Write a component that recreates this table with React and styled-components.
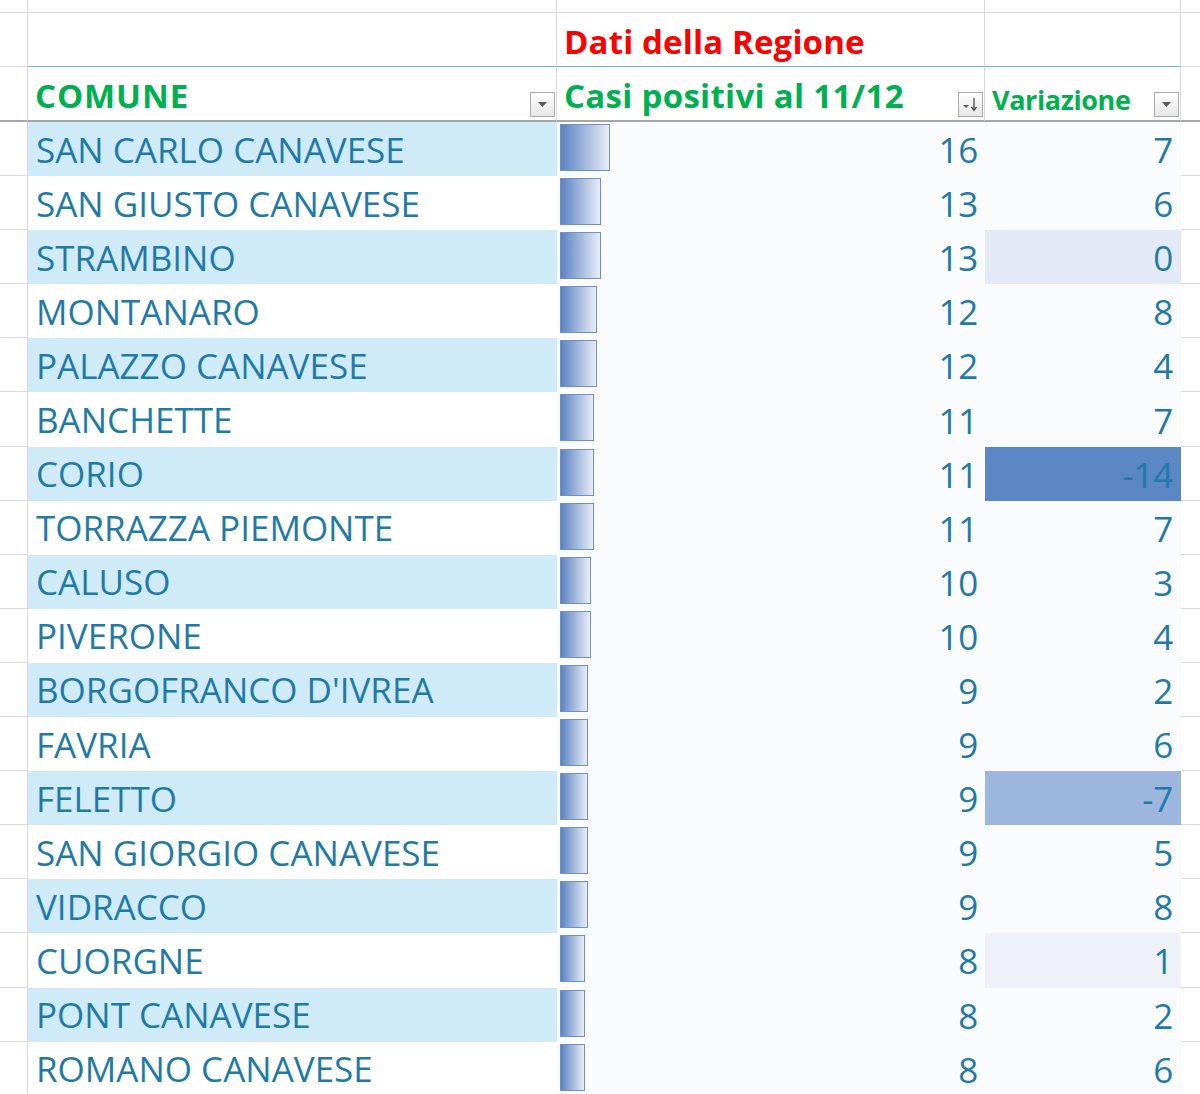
import React from 'react';
import styled, { createGlobalStyle } from 'styled-components';

const GlobalStyle = createGlobalStyle`
  html, body { margin: 0; padding: 0; background: #ffffff; }
  body { font-family: "Open Sans", "Liberation Sans", sans-serif; }
`;

const COLS = '28px 529px 428px 196px 1fr';
const GRID = '#d9d9d9';
const TEXT = '#1f7aa8';

const data = [
  ['SAN CARLO CANAVESE', 16, 7],
  ['SAN GIUSTO CANAVESE', 13, 6],
  ['STRAMBINO', 13, 0],
  ['MONTANARO', 12, 8],
  ['PALAZZO CANAVESE', 12, 4],
  ['BANCHETTE', 11, 7],
  ['CORIO', 11, -14],
  ['TORRAZZA PIEMONTE', 11, 7],
  ['CALUSO', 10, 3],
  ['PIVERONE', 10, 4],
  ["BORGOFRANCO D'IVREA", 9, 2],
  ['FAVRIA', 9, 6],
  ['FELETTO', 9, -7],
  ['SAN GIORGIO CANAVESE', 9, 5],
  ['VIDRACCO', 9, 8],
  ['CUORGNE', 8, 1],
  ['PONT CANAVESE', 8, 2],
  ['ROMANO CANAVESE', 8, 6],
];

const varFill = (v) => {
  if (v === -14) return '#5b87c5';
  if (v === -7) return '#9cb6dd';
  if (v === 0) return '#e3eaf5';
  if (v === 1) return '#eef2f8';
  return '#fafbfd';
};

const Sheet = styled.div`
  width: 1200px;
  height: 1094px;
  overflow: hidden;
  background: #ffffff;
`;

const Row = styled.div`
  display: grid;
  grid-template-columns: ${COLS};
  height: ${(p) => p.$h}px;
  box-sizing: border-box;
`;

const Stub = styled.div`
  border-right: 1px solid ${GRID};
  border-bottom: ${(p) => (p.$heavy ? '2px solid #a6a6a6' : `1px solid ${GRID}`)};
`;

const TopCell = styled.div`
  border-right: ${(p) => (p.$last ? 'none' : `1px solid ${GRID}`)};
  border-bottom: 1px solid ${GRID};
`;

const TitleCell = styled.div`
  display: flex;
  align-items: flex-end;
  padding: 0 0 2px 7px;
  border-right: ${(p) => (p.$last ? 'none' : `1px solid ${GRID}`)};
  border-bottom: 1px solid ${(p) => (p.$blue ? '#66b4da' : GRID)};
  font-size: 33px;
  font-weight: 700;
  letter-spacing: 0.15px;
  color: #ff0000;
  line-height: 44px;
  white-space: nowrap;
`;

const HeadCell = styled.div`
  display: flex;
  align-items: flex-end;
  justify-content: space-between;
  padding: 0 ${(p) => (p.$pr ? `${p.$pr}px` : '0')} 2px 7px;
  border-right: ${(p) => (p.$line ? `1px solid ${GRID}` : 'none')};
  border-bottom: 2px solid #a6a6a6;
  color: #00b050;
  font-weight: 700;
  white-space: nowrap;
`;

const HeadLabel = styled.span`
  font-size: ${(p) => p.$size || 33}px;
  letter-spacing: ${(p) => p.$ls || 0}px;
  line-height: ${(p) => p.$lh || 44}px;
`;

const FilterBtn = styled.div`
  width: 23px;
  height: 23px;
  margin-bottom: 1px;
  flex: none;
  border: 1px solid #ababab;
  background: linear-gradient(#ffffff, #e6e6e6);
  display: flex;
  align-items: center;
  justify-content: center;
`;

const NameCell = styled.div`
  display: flex;
  align-items: center;
  padding-left: 8px;
  background: ${(p) => (p.$band ? '#cfebf8' : '#ffffff')};
  color: ${TEXT};
  font-size: 35px;
  letter-spacing: 0px;
  white-space: nowrap;
  overflow: hidden;
`;

const CasesCell = styled.div`
  display: flex;
  align-items: center;
  justify-content: space-between;
  padding: 0 7px 0 3px;
  background: #fafbfd;
  color: ${TEXT};
  font-size: 35px;
  letter-spacing: -0.3px;
`;

const Bar = styled.div`
  align-self: flex-start;
  margin-top: 2px;
  height: 47px;
  box-sizing: border-box;
  border: 1px solid #6f8fc6;
  background: linear-gradient(to right, #5a83c2, #e9edf6);
`;

const VarCell = styled.div`
  display: flex;
  align-items: center;
  justify-content: flex-end;
  padding-right: 8px;
  background: ${(p) => p.$fill};
  color: ${TEXT};
  font-size: 35px;
  letter-spacing: -0.3px;
`;

const Edge = styled.div`
  border-bottom: 1px solid ${GRID};
`;

const Num = styled.span`
  padding-top: 1px;
`;

const DropArrow = () => (
  <svg width="11" height="7" viewBox="0 0 11 7">
    <path d="M1 1 L10 1 L5.5 6 Z" fill="#5a5a5a" />
  </svg>
);

const SortArrow = () => (
  <svg width="19" height="15" viewBox="0 0 19 15">
    <path d="M2 8 L8 8 L5 11 Z" fill="#5a5a5a" />
    <path d="M13 1 L13 13" stroke="#4a4a4a" strokeWidth="1.3" />
    <path d="M10.5 10 L13 13.5 L15.5 10" stroke="#4a4a4a" strokeWidth="1.3" fill="none" />
  </svg>
);

export default function App() {
  return (
    <>
      <GlobalStyle />
      <Sheet>
        <Row $h={13}>
          <Stub />
          <TopCell />
          <TopCell />
          <TopCell />
          <TopCell $last />
        </Row>
        <Row $h={54}>
          <Stub />
          <TitleCell $blue />
          <TitleCell $blue>Dati della Regione</TitleCell>
          <TitleCell $blue />
          <TitleCell $last />
        </Row>
        <Row $h={55}>
          <Stub $heavy />
          <HeadCell $line $pr={1}>
            <HeadLabel $ls={0.9}>COMUNE</HeadLabel>
            <FilterBtn><DropArrow /></FilterBtn>
          </HeadCell>
          <HeadCell $line $pr={1}>
            <HeadLabel $ls={0.3}>Casi positivi al 11/12</HeadLabel>
            <FilterBtn><SortArrow /></FilterBtn>
          </HeadCell>
          <HeadCell $line $pr={1}>
            <HeadLabel $size={27} $ls={-0.4} $lh={36}>Variazione</HeadLabel>
            <FilterBtn><DropArrow /></FilterBtn>
          </HeadCell>
          <HeadCell />
        </Row>
        {data.map(([name, cases, delta], i) => (
          <Row $h={54.1} key={name}>
            <Stub />
            <NameCell $band={i % 2 === 0}>{name}</NameCell>
            <CasesCell>
              <Bar style={{ width: `${Math.round(cases * 3.2 - 1)}px` }} />
              <Num>{cases}</Num>
            </CasesCell>
            <VarCell $fill={varFill(delta)}>
              <Num>{delta}</Num>
            </VarCell>
            <Edge />
          </Row>
        ))}
      </Sheet>
    </>
  );
}
